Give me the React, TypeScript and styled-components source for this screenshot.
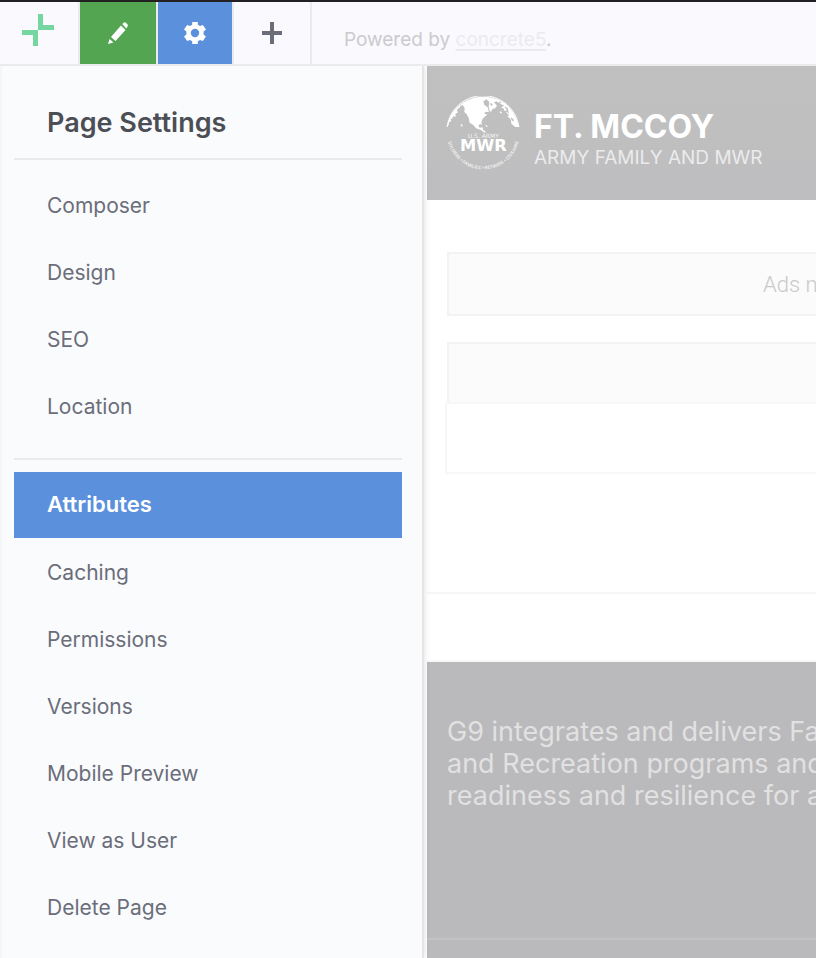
import React from "react";
import styled, { createGlobalStyle } from "styled-components";

const Global = createGlobalStyle`
  * { box-sizing: border-box; }
  body { margin: 0; background: #fff; font-family: Inter, "Liberation Sans", sans-serif; }
  h1, h2, p, ul { margin: 0; padding: 0; }
`;

const Shell = styled.div`
  display: flex;
  flex-direction: column;
  min-height: 100vh;
  overflow: hidden;
`;

const Toolbar = styled.header`
  display: flex;
  height: 66px;
  background: #faf9fe;
  border-top: 2px solid #222022;
  border-bottom: 2px solid #ebebee;
`;

const ToolButton = styled.button<{ $width: number; $fill?: string }>`
  display: flex;
  align-items: center;
  justify-content: center;
  width: ${(p) => p.$width}px;
  padding: 0;
  border: 0;
  border-right: 2px solid #ebebee;
  background: ${(p) => p.$fill ?? "transparent"};
  background-clip: padding-box;
  cursor: pointer;
`;

const LogoButton = styled(ToolButton)`
  padding: 0 2px 6px 0;
`;

const Powered = styled.p`
  padding: 26px 0 0 32px;
  font-size: 19px;
  line-height: 24px;
  color: #cbcbcd;
  white-space: nowrap;

  a {
    color: #ebebef;
    text-decoration: underline;
    text-decoration-thickness: 2px;
    text-underline-offset: 3px;
  }
`;

const Body = styled.div`
  display: flex;
  flex: 1;
`;

const Sidebar = styled.aside`
  flex: 0 0 424px;
  padding: 36px 20px 0 12px;
  background: #fafbfd;
  border-left: 2px solid #f5f6f8;
  border-right: 2px solid #e5e5e6;
  box-shadow: 0 0 6px rgba(0, 0, 0, 0.14);
  clip-path: inset(0 -8px 0 0);
  z-index: 1;
`;

const Title = styled.h1`
  padding: 2px 33px 16px;
  border-bottom: 2px solid #e9eaec;
  font-size: 27px;
  line-height: 38px;
  font-weight: 600;
  color: #4c4e55;
`;

const Menu = styled.ul`
  display: flex;
  flex-direction: column;
  gap: 1px;
  padding: 12px 0;
  list-style: none;

  & + & {
    margin-top: 7px;
    border-top: 2px solid #e9eaec;
  }
`;

const MenuLink = styled.a<{ $active?: boolean }>`
  display: block;
  height: 66px;
  padding: 0 33px;
  font-size: ${(p) => (p.$active ? 22 : 21)}px;
  line-height: ${(p) => (p.$active ? 64 : 67)}px;
  font-weight: ${(p) => (p.$active ? 600 : 400)};
  color: ${(p) => (p.$active ? "#fff" : "#6b6e7a")};
  background: ${(p) => (p.$active ? "#5b90dc" : "transparent")};
  text-decoration: none;
`;

const Page = styled.main`
  display: flex;
  flex: 1;
  flex-direction: column;
  min-width: 0;
  margin-left: 3px;
  overflow: hidden;
  white-space: nowrap;
`;

const Banner = styled.div`
  display: flex;
  gap: 14px;
  height: 134px;
  padding: 30px 19px;
  background: linear-gradient(#c0c0c0, #bebec0);
`;

const BannerText = styled.div`
  padding-top: 13px;

  h2 {
    font-size: 32px;
    line-height: 36px;
    font-weight: 700;
    color: #fff;
  }

  p {
    font-size: 19px;
    line-height: 26px;
    color: #ebebec;
  }
`;

const Content = styled.section`
  height: 394px;
  padding: 52px 0 0 18px;
  border-bottom: 2px solid #f6f6f6;
`;

const AdNotice = styled.div`
  height: 64px;
  margin: 0 0 26px 2px;
  padding-left: 314px;
  border: 2px solid #f3f3f3;
  border-right: 0;
  background: #fbfbfb;
  font-family: Roboto, sans-serif;
  font-size: 22px;
  font-weight: 300;
  line-height: 62px;
  color: #c9c9c9;
`;

const PanelHead = styled.div`
  height: 60px;
  margin-left: 2px;
  border: 2px solid #f3f3f3;
  border-width: 2px 0 0 2px;
  background: #fbfbfb;
`;

const PanelBody = styled.div`
  height: 72px;
  border: 2px solid #f7f7f7;
  border-right: 0;
`;

const Spacer = styled.div`
  height: 68px;
  border-bottom: 2px solid #f8f8f9;
`;

const Footer = styled.footer`
  flex: 1;
  background: #bab9bb;

  p {
    height: 278px;
    padding: 54px 0 0 20px;
    border-bottom: 2px solid #c2c2c3;
    font-size: 27px;
    line-height: 32px;
    color: #e1e1e2;
  }
`;

const Emblem = () => (
  <svg width="74" height="76" viewBox="48 45 222 228" role="img" aria-label="U.S. Army MWR">
    <defs>
      <path id="motto" d="M51 156A109 109 0 0 0 269 156" />
    </defs>
    <path d="M51 138A109 109 0 0 1 267 138" fill="none" stroke="#fff" strokeWidth="3" />
    <g fill="#fff">
      <path d="M51 138C56 112 68 90 86 75L88 79 80 88 84 94 76 99 77 107 69 106 67 113 61 113 64 121 57 124 56 131z" />
      <path d="M86 75C106 57 133 47 160 47C181 47 198 52 213 60L207 65 199 61 192 64 201 74 196 81 187 85 183 93 178 88 176 76 178 63 169 55 160 61 163 72 173 79 177 94 168 92 162 97 172 101 164 107 157 115 154 125 157 132 151 129 145 133 149 140 158 139 159 146 168 153 164 155 153 147 138 142 130 132 119 125 116 110 109 98 103 93 104 81 98 72 92 74 88 81z" />
      <path d="M213 60C240 75 259 103 267 138L256 138 244 128 243 116 232 105 238 103 229 95 231 88 223 90 222 83 214 80 222 73 211 69z" />
      <path d="M93 130l5 1-1 6-5-3zM211 90l5 5-3 3-4-4zM164 131l10 4-4 3z" />
    </g>
    <path d="M222 76l9 12-3 2 9 8-4-17zM244 109l8 8-3 5-6-9zM183 65l5 6-3 4-5-5z" fill="#c0c0c0" />
    <text x="160" y="170" textAnchor="middle" fontSize="18" fontWeight="500" fill="#f5f5f5" fontFamily="DejaVu Sans">U.S. ARMY</text>
    <text x="160" y="209" textAnchor="middle" fontSize="49" fontWeight="700" fill="#fff" fontFamily="DejaVu Sans">MWR</text>
    <text fontSize="13" fontWeight="600" fill="#f0f0f0" fontFamily="Inter">
      <textPath href="#motto" startOffset="50%" textAnchor="middle">SOLDIERS • FAMILIES • RETIREES • CIVILIANS</textPath>
    </text>
  </svg>
);

const LogoIcon = () => (
  <svg width="32" height="32" viewBox="0 0 32 32" fill="#75d6a0">
    <path d="M16 0h5v11h11v5H16zM0 16h16v16h-5V21H0z" />
  </svg>
);

const PencilIcon = () => (
  <svg width="20" height="22" viewBox="0 0 20 22" fill="#fff">
    <path d="M13 3.5 17.5 8 7.5 19 3 15zM14.3 2 16 .5Q17 0 18 .8L19.5 2.4Q20.4 3.6 19.5 4.6L18.3 6.5zM1.6 17 5.5 20.5 0 22z" />
  </svg>
);

const GearIcon = () => (
  <svg width="22" height="22" viewBox="0 0 22 22" fill="#fff" fillRule="evenodd">
    <path d="M8.2 0h5.6v2.7l2.2 1.3 2.8-1L22 7.6 19.6 9.5v3L22 14.4 18.8 19 16 18l-2.2 1.3V22H8.2v-2.7L6 18l-2.8 1L0 14.4l2.4-1.9v-3L0 7.6 3.2 3 6 4l2.2-1.3zM11 6.8a4.2 4.2 0 1 0 0 8.4 4.2 4.2 0 0 0 0-8.4z" />
  </svg>
);

const PlusIcon = () => (
  <svg width="20" height="22" viewBox="0 0 20 22" fill="#6b6e7a">
    <path d="M8 0h4v9h8v4h-8v9H8v-9H0V9h8z" />
  </svg>
);

const pageItems = ["Composer", "Design", "SEO", "Location"];
const advancedItems = ["Attributes", "Caching", "Permissions", "Versions", "Mobile Preview", "View as User", "Delete Page"];

const MenuList = ({ items }: { items: string[] }) => (
  <Menu>
    {items.map((item) => (
      <li key={item}>
        <MenuLink href="#" $active={item === "Attributes"}>{item}</MenuLink>
      </li>
    ))}
  </Menu>
);

export default function App() {
  return (
    <Shell>
      <Global />
      <Toolbar>
        <LogoButton $width={80} aria-label="Dashboard"><LogoIcon /></LogoButton>
        <ToolButton $width={78} $fill="#53a551" aria-label="Edit page"><PencilIcon /></ToolButton>
        <ToolButton $width={76} $fill="#5b90dc" aria-label="Page settings"><GearIcon /></ToolButton>
        <ToolButton $width={78} aria-label="Add content"><PlusIcon /></ToolButton>
        <Powered>Powered by <a href="#concrete5">concrete5</a>.</Powered>
      </Toolbar>
      <Body>
        <Sidebar>
          <Title>Page Settings</Title>
          <MenuList items={pageItems} />
          <MenuList items={advancedItems} />
        </Sidebar>
        <Page>
          <Banner>
            <Emblem />
            <BannerText>
              <h2>FT. MCCOY</h2>
              <p>ARMY FAMILY AND MWR</p>
            </BannerText>
          </Banner>
          <Content>
            <AdNotice>Ads n</AdNotice>
            <PanelHead />
            <PanelBody />
          </Content>
          <Spacer />
          <Footer>
            <p>G9 integrates and delivers Fa<br />and Recreation programs and<br />readiness and resilience for a</p>
          </Footer>
        </Page>
      </Body>
    </Shell>
  );
}
